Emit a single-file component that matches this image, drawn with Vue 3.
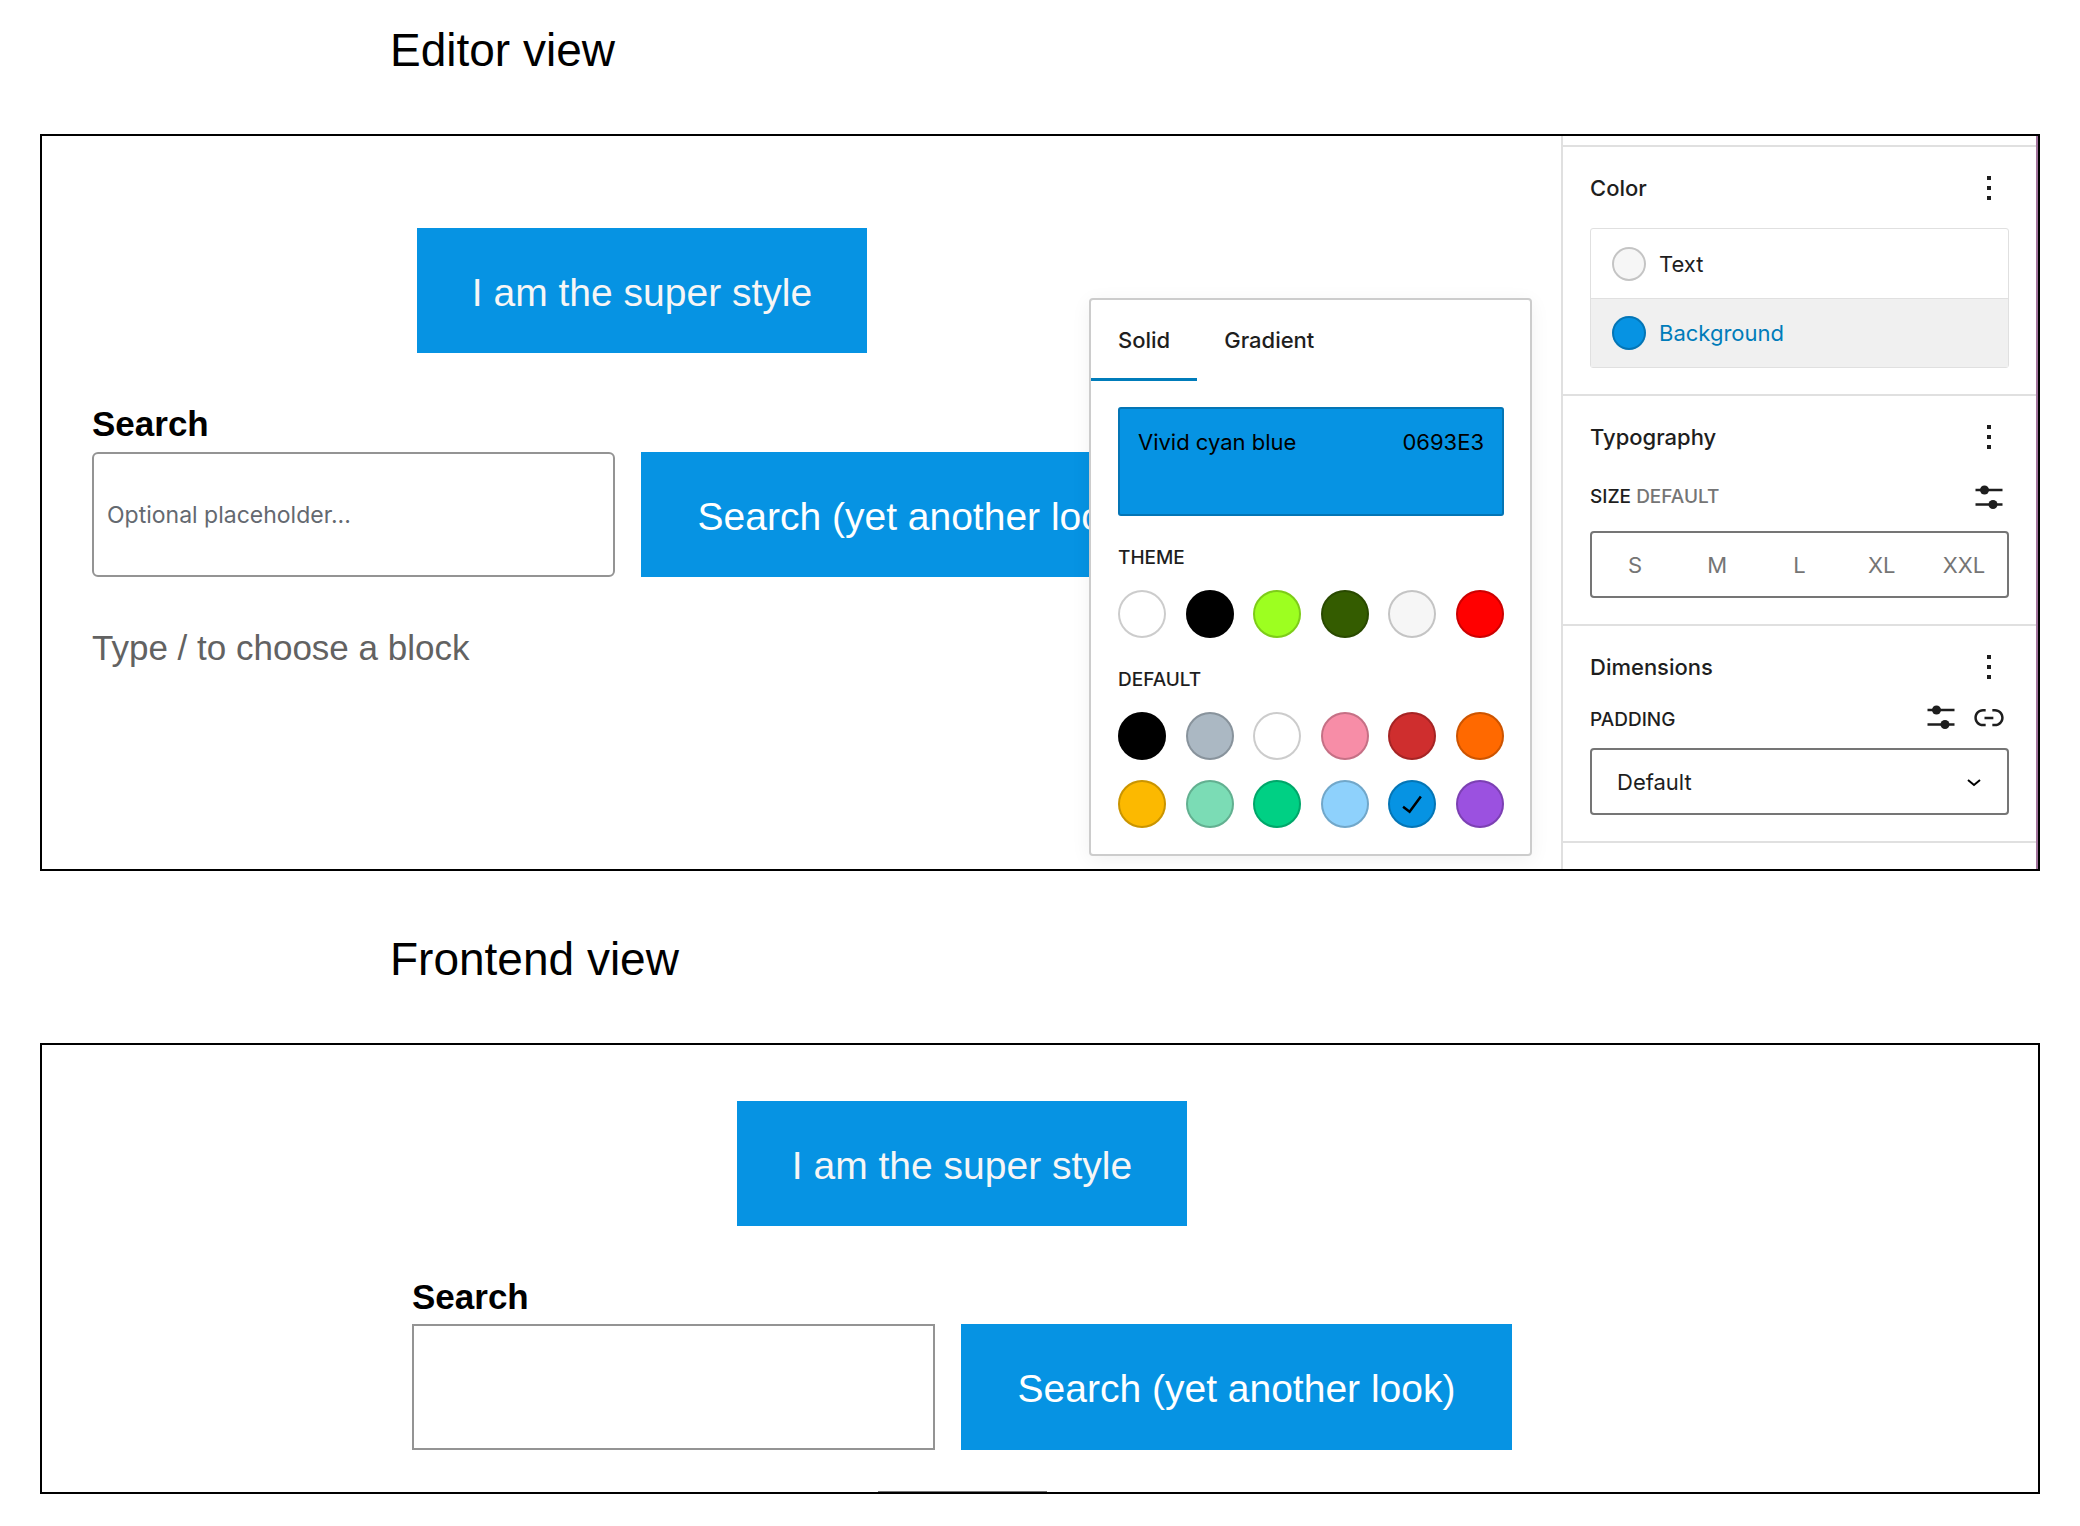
<script setup>
import { ref } from 'vue'

const themeColors = [
  { name: 'White', value: '#ffffff' },
  { name: 'Black', value: '#000000' },
  { name: 'Lime', value: '#9dff20' },
  { name: 'Dark green', value: '#345c00' },
  { name: 'Light gray', value: '#f6f6f6' },
  { name: 'Red', value: '#ff0000' },
]
const defaultColors = [
  { name: 'Black', value: '#000000' },
  { name: 'Cyan bluish gray', value: '#abb8c3' },
  { name: 'White', value: '#ffffff' },
  { name: 'Pale pink', value: '#f78da7' },
  { name: 'Vivid red', value: '#cf2e2e' },
  { name: 'Luminous vivid orange', value: '#ff6900' },
  { name: 'Luminous vivid amber', value: '#fcb900' },
  { name: 'Light green cyan', value: '#7bdcb5' },
  { name: 'Vivid green cyan', value: '#00d084' },
  { name: 'Pale cyan blue', value: '#8ed1fc' },
  { name: 'Vivid cyan blue', value: '#0693e3' },
  { name: 'Vivid purple', value: '#9b51e0' },
]
const palettes = [
  { title: 'THEME', colors: themeColors },
  { title: 'DEFAULT', colors: defaultColors },
]
const sizes = ['S', 'M', 'L', 'XL', 'XXL']
const selected = ref('#0693e3')
const padding = ref('Default')

const moreIcon = 'M10.8 4.8h2.4v2.4h-2.4zM10.8 10.8h2.4v2.4h-2.4zM10.8 16.8h2.4v2.4h-2.4z'
</script>

<template>
  <main class="page">
    <h2 class="heading">Editor view</h2>
    <section class="panel editor">
      <div class="canvas">
        <div class="content">
          <button type="button" class="cta style-button">I am the super style</button>
          <label class="search-label" for="editor-search">Search</label>
          <div class="search-row">
            <input id="editor-search" class="search-input rounded" type="text" placeholder="Optional placeholder..." />
            <button type="button" class="cta search-button">Search (yet another look)</button>
          </div>
          <p class="prompt">Type / to choose a block</p>
        </div>
      </div>

      <div class="popover">
        <div class="tabs" role="tablist">
          <button type="button" class="tab active" role="tab" aria-selected="true">Solid</button>
          <button type="button" class="tab" role="tab" aria-selected="false">Gradient</button>
        </div>
        <div class="picker">
          <button type="button" class="current">
            <span>Vivid cyan blue</span>
            <span>0693E3</span>
          </button>
          <div v-for="palette in palettes" :key="palette.title" class="palette">
            <h3 class="caps">{{ palette.title }}</h3>
            <div class="swatches">
              <button
                v-for="color in palette.colors"
                :key="color.value"
                type="button"
                class="swatch"
                :aria-label="color.name"
                :style="{ backgroundColor: color.value }"
                @click="selected = color.value"
              >
                <svg v-if="color.value === selected" viewBox="0 0 24 24" width="40" height="40" aria-hidden="true">
                  <path d="M16.7 7.1l-6.3 8.5-3.3-2.5-.9 1.2 4.5 3.4L17.9 8z" fill="#000" />
                </svg>
              </button>
            </div>
          </div>
        </div>
      </div>

      <aside class="sidebar">
        <section class="group">
          <header class="group-head">
            <h3>Color</h3>
            <button type="button" class="icon" aria-label="Color options">
              <svg viewBox="0 0 24 24" width="40" height="40"><path :d="moreIcon" /></svg>
            </button>
          </header>
          <div class="color-list">
            <button type="button" class="color-item">
              <span class="dot text-dot"></span>Text
            </button>
            <button type="button" class="color-item current-item">
              <span class="dot background-dot"></span>Background
            </button>
          </div>
        </section>

        <section class="group">
          <header class="group-head">
            <h3>Typography</h3>
            <button type="button" class="icon" aria-label="Typography options">
              <svg viewBox="0 0 24 24" width="40" height="40"><path :d="moreIcon" /></svg>
            </button>
          </header>
          <div class="control-head size-head">
            <span class="caps">SIZE <span class="muted">DEFAULT</span></span>
            <button type="button" class="icon" aria-label="Set custom size">
              <svg viewBox="0 0 40 40" width="40" height="40">
                <path d="M6.500 13h27M6.500 27.500h27" stroke="#1e1e1e" stroke-width="2.500" />
                <circle cx="15.500" cy="13" r="4.500" /><circle cx="24" cy="27.500" r="4.500" />
              </svg>
            </button>
          </div>
          <div class="sizes">
            <button v-for="size in sizes" :key="size" type="button">{{ size }}</button>
          </div>
        </section>

        <section class="group">
          <header class="group-head">
            <h3>Dimensions</h3>
            <button type="button" class="icon" aria-label="Dimensions options">
              <svg viewBox="0 0 24 24" width="40" height="40"><path :d="moreIcon" /></svg>
            </button>
          </header>
          <div class="control-head padding-head">
            <label class="caps" for="padding">PADDING</label>
            <span class="icons">
              <button type="button" class="icon" aria-label="Set custom padding">
                <svg viewBox="0 0 40 40" width="40" height="40">
                  <path d="M6.500 13h27M6.500 27.500h27" stroke="#1e1e1e" stroke-width="2.500" />
                  <circle cx="15.500" cy="13" r="4.500" /><circle cx="24" cy="27.500" r="4.500" />
                </svg>
              </button>
              <button type="button" class="icon" aria-label="Link sides">
                <svg viewBox="0 0 24 24" width="40" height="40">
                  <path d="M15.6 7.2H14v1.5h1.600c2 0 3.700 1.700 3.700 3.700s-1.700 3.700-3.700 3.700H14v1.500h1.600c2.800 0 5.200-2.300 5.200-5.200 0-2.900-2.300-5.200-5.200-5.200zM4.700 12.400c0-2 1.700-3.700 3.700-3.700H10V7.200H8.400c-2.900 0-5.200 2.300-5.200 5.200 0 2.900 2.300 5.200 5.200 5.200H10v-1.500H8.400c-2 0-3.700-1.700-3.700-3.700zm4.600.9h5.300v-1.500H9.300v1.500z" />
                </svg>
              </button>
            </span>
          </div>
          <div class="select">
            <select id="padding" v-model="padding">
              <option>Default</option>
            </select>
            <svg class="chevron" viewBox="0 0 14 8" width="14" height="8" aria-hidden="true">
              <path d="M1 1l6 5 6-5" fill="none" stroke="#000" stroke-width="2" />
            </svg>
          </div>
        </section>
      </aside>
    </section>

    <h2 class="heading">Frontend view</h2>
    <section class="panel frontend">
      <div class="content">
        <button type="button" class="cta style-button">I am the super style</button>
        <label class="search-label" for="front-search">Search</label>
        <div class="search-row">
          <input id="front-search" class="search-input" type="text" />
          <button type="button" class="cta search-button">Search (yet another look)</button>
        </div>
        <hr class="separator" />
      </div>
    </section>
  </main>
</template>

<style>
body {
  background: #fff;
}
</style>

<style scoped>
* {
  box-sizing: border-box;
}
.page {
  padding: 0 40px 30px;
  font-family: Inter, "Liberation Sans", sans-serif;
  color: #1e1e1e;
}
button,
input,
select {
  font-family: inherit;
  margin: 0;
}
button {
  padding: 0;
  border: 0;
  background: none;
  color: inherit;
}
h2,
h3,
p {
  margin: 0;
  font-weight: 400;
}
.heading,
.cta,
.search-label,
.prompt {
  font-family: "Liberation Sans", Arial, sans-serif;
}
.heading {
  padding: 22px 0 56px 350px;
  font-size: 46px;
  line-height: 56px;
  color: #000;
}
.panel {
  position: relative;
  display: flex;
  border: 2px solid #000;
  overflow: hidden;
}
.panel + .heading {
  padding: 60px 0 56px 350px;
}
.canvas {
  flex: 1;
  min-width: 0;
  padding: 92px 0 0 50px;
}
.content {
  display: flex;
  flex-direction: column;
  width: 1100px;
}
.cta {
  height: 125px;
  padding-top: 4px;
  background: #0693e3;
  color: #fff;
  font-size: 39px;
  white-space: nowrap;
}
.style-button {
  align-self: center;
  width: 450px;
  color: #f6f6f6;
}
.search-label {
  margin-top: 47px;
  padding-bottom: 4px;
  font-size: 35px;
  line-height: 48px;
  font-weight: 700;
  color: #000;
}
.search-row {
  display: flex;
  gap: 26px;
}
.search-input {
  width: 523px;
  height: 125px;
  padding: 0 13px;
  border: 2px solid #949494;
  border-radius: 0;
  background: #fff;
  font-size: 23px;
}
.search-input.rounded {
  border-radius: 6px;
}
.search-input::placeholder {
  color: #646970;
  opacity: 1;
}
.search-button {
  flex: 1;
}
.prompt {
  margin-top: 47px;
  font-size: 35px;
  line-height: 48px;
  color: #626262;
}

.popover {
  position: absolute;
  top: 162px;
  right: 506px;
  width: 443px;
  padding-bottom: 26px;
  border: 2px solid #ccc;
  border-radius: 4px;
  background: #fff;
  box-shadow: 0 4px 20px rgba(0, 0, 0, 0.06);
}
.tabs {
  display: flex;
}
.tab {
  height: 81px;
  padding: 2px 27px 0;
  border-bottom: 3px solid transparent;
  font-size: 22px;
  font-weight: 500;
}
.tab.active {
  border-bottom-color: #007cba;
}
.picker {
  padding: 26px 26px 0 27px;
}
.current {
  display: flex;
  justify-content: space-between;
  align-items: flex-start;
  width: 100%;
  height: 109px;
  padding: 21px 20px;
  border-radius: 3px;
  background: #0693e3;
  box-shadow: inset 0 0 0 2px rgba(0, 0, 0, 0.2);
  font-size: 22px;
  line-height: 28px;
  color: #000;
}
.palette {
  margin-top: 29px;
}
.caps {
  font-size: 19px;
  line-height: 26px;
  font-weight: 500;
}
.swatches {
  display: grid;
  grid-template-columns: repeat(6, 48px);
  justify-content: space-between;
  row-gap: 20px;
  margin-top: 19px;
}
.swatch {
  display: flex;
  align-items: center;
  justify-content: center;
  height: 48px;
  border-radius: 50%;
  box-shadow: inset 0 0 0 2px rgba(0, 0, 0, 0.2);
}

.sidebar {
  flex: none;
  width: 477px;
  padding: 9px 0 26px;
  border-left: 2px solid #e0e0e0;
  border-right: 2px solid #a0719a;
}
.group {
  padding: 21px 27px 26px;
  border-top: 2px solid #e0e0e0;
}
.group:last-child {
  border-bottom: 2px solid #e0e0e0;
}
.group-head,
.control-head {
  display: flex;
  align-items: center;
  justify-content: space-between;
}
.group-head h3 {
  font-size: 22px;
  line-height: 40px;
  font-weight: 500;
}
.icons {
  display: flex;
  gap: 8px;
}
.icon {
  width: 40px;
  height: 40px;
}
.icon svg {
  display: block;
  fill: #1e1e1e;
}
.muted {
  color: #757575;
}
.color-list {
  margin-top: 20px;
  border: 1px solid #e0e0e0;
  border-radius: 3px;
}
.color-item {
  display: flex;
  align-items: center;
  gap: 13px;
  width: 100%;
  height: 69px;
  padding-left: 21px;
  font-size: 22px;
}
.current-item {
  border-top: 1px solid #e0e0e0;
  background: #f0f0f0;
  color: #007cba;
}
.dot {
  width: 34px;
  height: 34px;
  border-radius: 50%;
  box-shadow: inset 0 0 0 2px rgba(0, 0, 0, 0.2);
}
.text-dot {
  background: #f6f6f6;
}
.background-dot {
  background: #0693e3;
}
.size-head {
  margin-top: 20px;
}
.sizes {
  display: flex;
  margin-top: 14px;
  height: 67px;
  padding: 0 2px;
  border: 2px solid #757575;
  border-radius: 4px;
}
.sizes button {
  flex: 1;
  font-size: 22px;
  color: #757575;
}
.padding-head {
  margin-top: 10px;
}
.padding-head .caps {
  padding-top: 6px;
}
.select {
  position: relative;
  margin-top: 11px;
}
.select select {
  display: block;
  width: 100%;
  height: 67px;
  padding: 0 25px;
  border: 2px solid #757575;
  border-radius: 4px;
  background: #fff;
  color: #1e1e1e;
  font-size: 22px;
  appearance: none;
}
.chevron {
  position: absolute;
  top: 31px;
  right: 28px;
}

.frontend .content {
  margin: 56px 0 0 370px;
}
.frontend .search-label {
  padding-bottom: 3px;
}
.frontend .search-row > * {
  height: 126px;
}
.separator {
  width: 169px;
  height: 1px;
  margin: 41px auto 0;
  border: 0;
  background: #767676;
}
</style>
